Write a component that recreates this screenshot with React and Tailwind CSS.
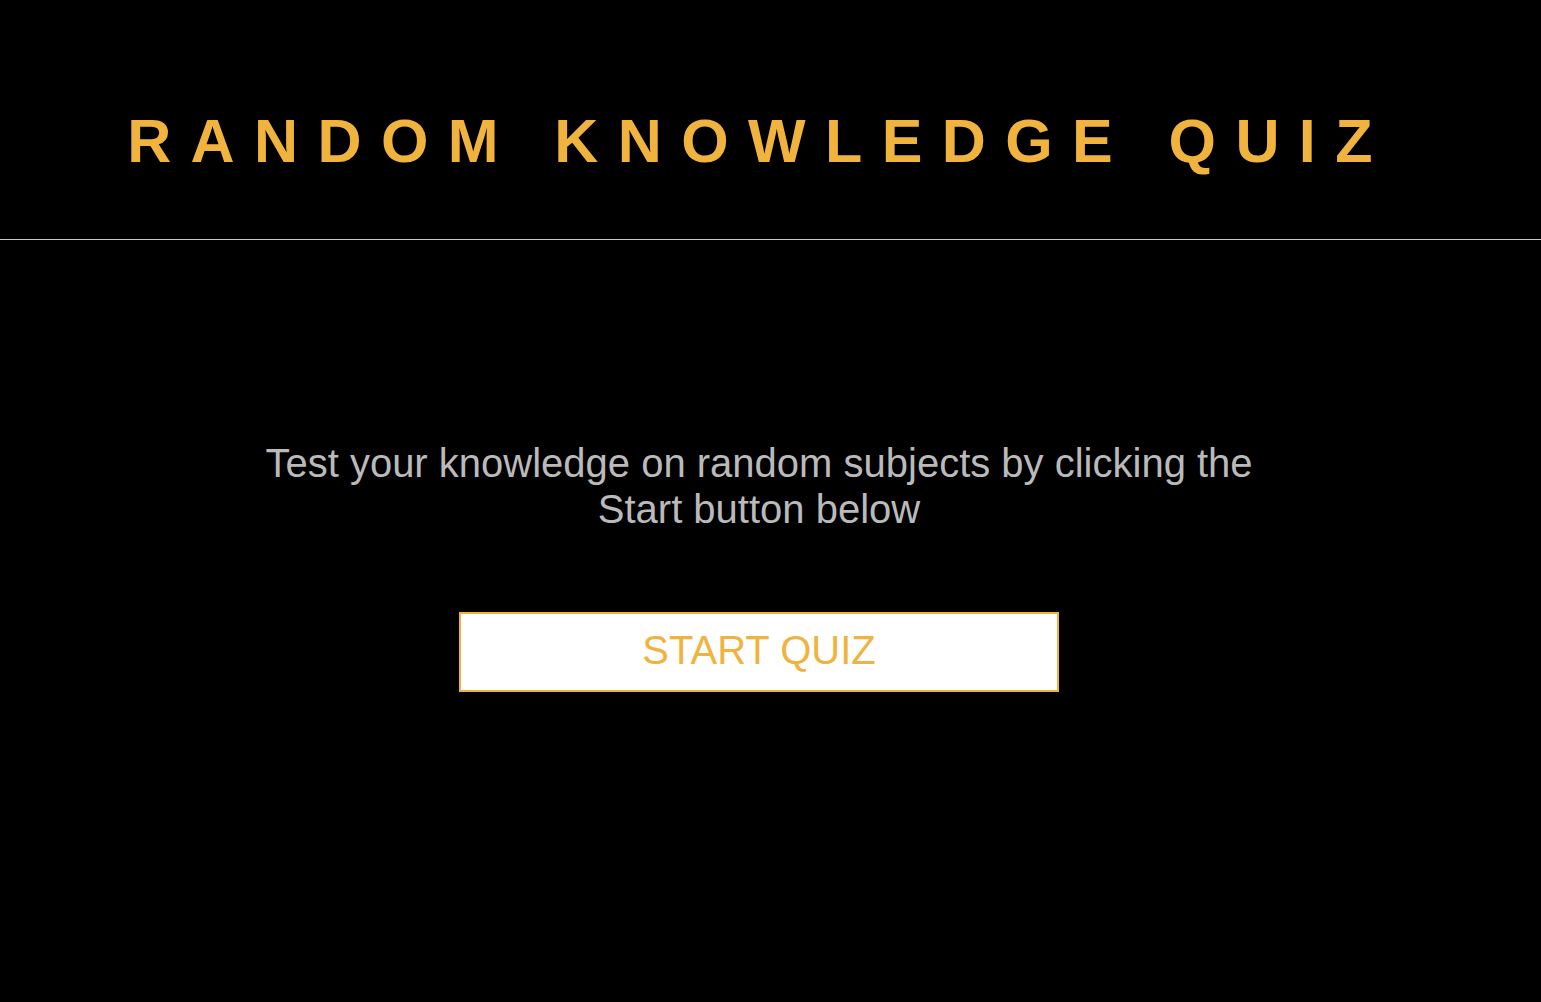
export default function App() {
    return (
        <div className="min-h-[1002px] bg-black font-['Liberation_Sans',Arial,sans-serif]">
            <header className="h-[240px] border-b border-[#c8c8c8] flex items-center justify-center pt-[44px] pr-[22px]">
                <h1 className="text-[61px] leading-none font-bold tracking-[0.318em] text-[#f0b43e]">
                    RANDOM KNOWLEDGE QUIZ
                </h1>
            </header>

            <main className="flex flex-col items-center pr-[23px] pt-[200px]">
                <p className="w-[1000px] text-center text-[40px] leading-[46px] text-[#bababa]">
                    Test your knowledge on random subjects by clicking the Start button below
                </p>
                <button className="mt-[80px] w-[600px] h-[80px] pb-[4px] bg-white border-2 border-[#f0b43e] text-[#f0b43e] text-[40px] leading-none">
                    START QUIZ
                </button>
            </main>
        </div>
    );
}
